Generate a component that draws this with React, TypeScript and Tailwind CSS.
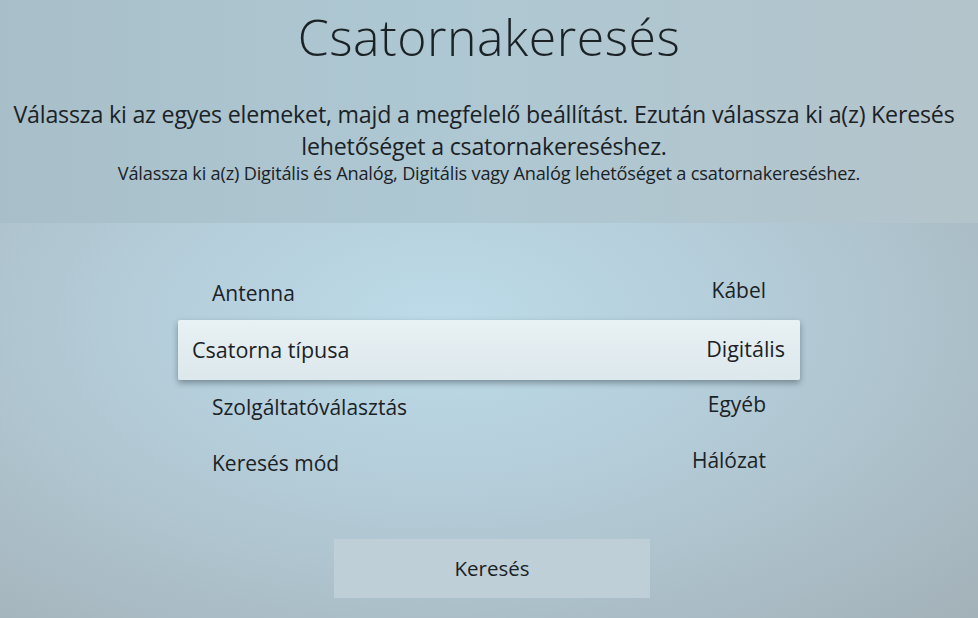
import React from 'react';

type Row = { label: string; value: string; selected?: boolean };

const ROWS: Row[] = [
  { label: 'Antenna', value: 'Kábel' },
  { label: 'Csatorna típusa', value: 'Digitális', selected: true },
  { label: 'Szolgáltatóválasztás', value: 'Egyéb' },
  { label: 'Keresés mód', value: 'Hálózat' },
];

const MenuRow = ({ row, first }: { row: Row; first?: boolean }) => {
  if (row.selected) {
    return (
      <div className="h-[60px] w-[622px] -ml-[34px] flex items-center justify-between pl-[14px] pr-[15px] bg-[linear-gradient(180deg,#e8f1f4,#dde8ec)] shadow-[0_3px_6px_rgba(40,55,65,0.45)] rounded-[2px]">
        <span className="text-[21.5px] font-medium">{row.label}</span>
        <span className="text-[21.5px] font-medium mb-[2px]">{row.value}</span>
      </div>
    );
  }
  return (
    <div className={`${first ? 'h-[52px]' : 'h-[56px]'} w-[554px] flex items-center justify-between`}>
      <span className="text-[21px] font-medium">{row.label}</span>
      <span className="text-[21px] font-medium mb-[7px]">{row.value}</span>
    </div>
  );
};

export default function App() {
  return (
    <div
      className="w-[978px] h-[618px] overflow-hidden flex flex-col text-[#1b2226]"
      style={{ fontFamily: '"Open Sans", "Noto Sans", sans-serif' }}
    >
      {/* fejléc */}
      <header className="h-[223px] flex flex-col items-center bg-[linear-gradient(90deg,#a8bfc9_0%,#aec8d3_45%,#b4c4cb_100%)]">
        <h1 className="mt-[6px] text-[50px] font-light leading-[62px] tracking-[0.5px]">Csatornakeresés</h1>
        <p className="mt-[30px] mr-[10px] w-[978px] text-center text-[23.2px] leading-[32px] font-medium tracking-[-0.2px]">
          Válassza ki az egyes elemeket, majd a megfelelő beállítást. Ezután válassza ki a(z) Keresés
          <br />
          lehetőséget a csatornakereséshez.
        </p>
        <p className="text-[18.2px] leading-[22px] font-medium tracking-[-0.2px]">
          Válassza ki a(z) Digitális és Analóg, Digitális vagy Analóg lehetőséget a csatornakereséshez.
        </p>
      </header>

      {/* beállítások */}
      <main className="flex-1 flex flex-col items-center bg-[radial-gradient(ellipse_at_45%_25%,#bddbe9_0%,#b3cbd7_45%,#a3b1b8_100%)]">
        <div className="mt-[45px] ml-[34px] flex flex-col">
          {ROWS.map((row, i) => (
            <MenuRow key={row.label} row={row} first={i === 0} />
          ))}
        </div>
        <button className="mt-[47px] ml-[6px] w-[316px] h-[59px] bg-[#bfcfd7] text-[20.5px] font-medium flex items-center justify-center">
          Keresés
        </button>
      </main>
    </div>
  );
}
